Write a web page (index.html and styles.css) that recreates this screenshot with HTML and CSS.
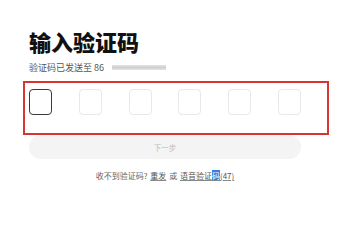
FILE: index.html
```html
<!DOCTYPE html>
<html lang="zh-CN">
<head>
<meta charset="utf-8">
<title>输入验证码</title>
<link rel="stylesheet" href="styles.css">
</head>
<body>
<main class="page">
  <h1 class="title">输入验证码</h1>
  <p class="subtitle">验证码已发送至 86 <span class="masked"></span></p>
  <div class="codes">
    <span class="code active"></span>
    <span class="code"></span>
    <span class="code"></span>
    <span class="code"></span>
    <span class="code"></span>
    <span class="code"></span>
  </div>
  <button class="next" type="button">下一步</button>
  <p class="help">收不到验证码? <a class="link">重发</a> 或 <a class="link">语音验证<span class="sel">码</span>(47)</a></p>
  <div class="annot"></div>
</main>
</body>
</html>
```

FILE: styles.css
```css
html, body {
  margin: 0;
  padding: 0;
  background: #fff;
}
body {
  font-family: "Noto Sans CJK SC", "Noto Sans", sans-serif;
  color: #222;
}
.page {
  position: relative;
  width: 272px;
  padding: 30px 0 0 29px;
  display: flex;
  flex-direction: column;
}
.title {
  margin: 0;
  font-size: 22px;
  line-height: 22px;
  font-weight: 900;
  color: #111;
}
.subtitle {
  margin: 11px 0 0;
  font-size: 9px;
  line-height: 9px;
  color: #555;
  display: flex;
  align-items: center;
  white-space: pre;
}
.masked {
  display: inline-block;
  width: 54px;
  height: 5px;
  margin-left: 6px;
  background: linear-gradient(to bottom, #e4e4e4, #cfcfcf 50%, #e4e4e4);
  filter: blur(0.6px);
}
.codes {
  margin-top: 17px;
  display: flex;
  justify-content: space-between;
}
.code {
  box-sizing: border-box;
  width: 23px;
  height: 26px;
  border: 1px solid #e8e8e8;
  border-radius: 4px;
}
.code.active {
  border: 1.5px solid #3a3a3a;
}
.next {
  margin-top: 20px;
  height: 24px;
  border: none;
  border-radius: 12px;
  background: #f4f4f4;
  color: #bdbdbd;
  font-family: inherit;
  font-size: 7.5px;
  padding: 0;
}
.help {
  margin: 12px 0 0;
  text-align: center;
  font-size: 8px;
  line-height: 10px;
  color: #666;
  word-spacing: 1px;
}
.link {
  color: #555;
  text-decoration-line: underline;
  text-decoration-color: #888;
  text-decoration-thickness: 1px;
  text-underline-offset: 1px;
}
.sel {
  background: #3b7ddd;
  color: #fff;
}
.annot {
  position: absolute;
  left: 23px;
  top: 81px;
  width: 306px;
  height: 54px;
  box-sizing: border-box;
  border: 2px solid #d6362f;
  pointer-events: none;
}
```
